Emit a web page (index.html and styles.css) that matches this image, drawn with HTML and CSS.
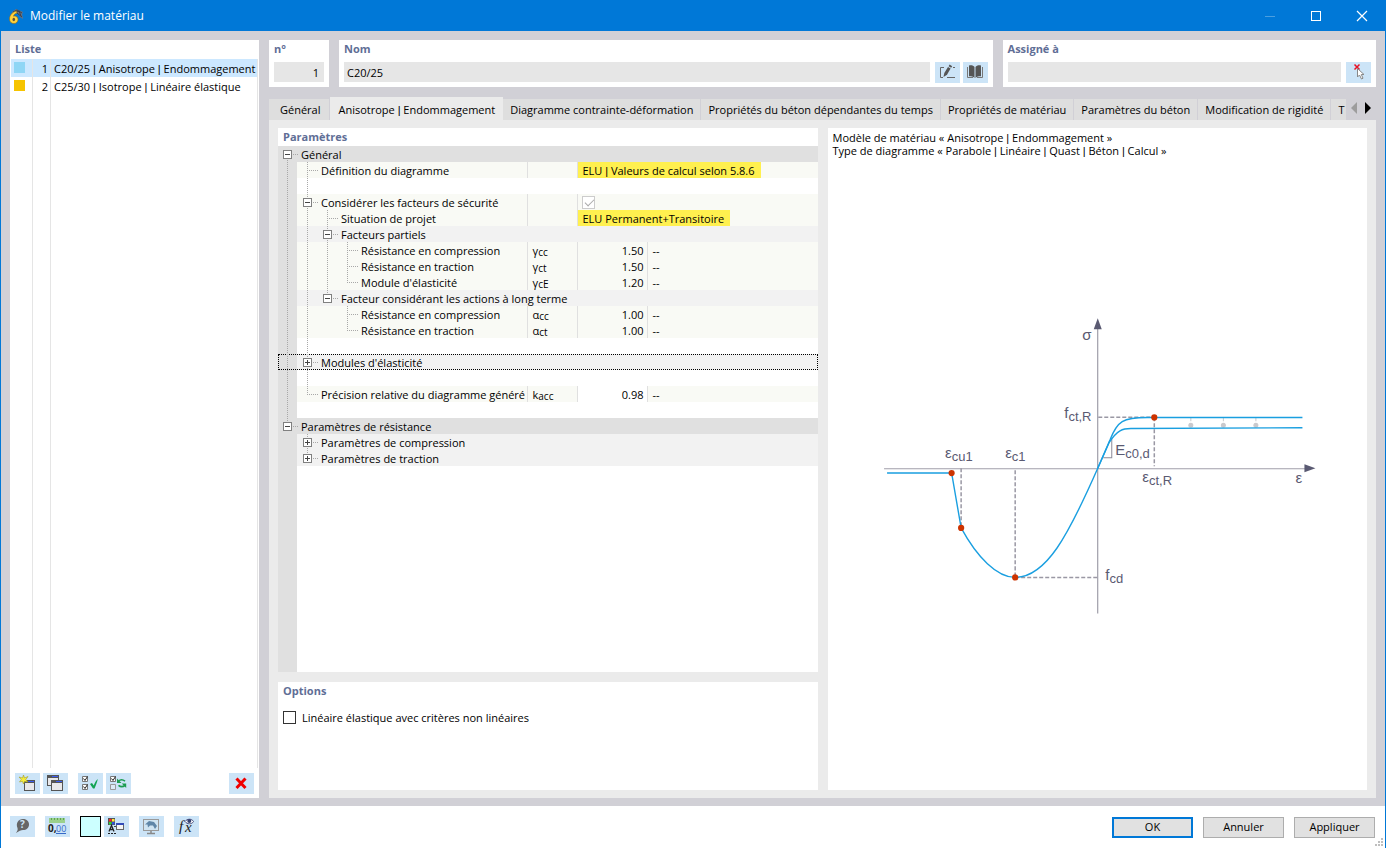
FILE: index.html
```html
<!DOCTYPE html>
<html lang="fr">
<head>
  <meta charset="UTF-8">
  <meta name="viewport" content="width=device-width, initial-scale=1.0">
  <title>Modifier le matériau</title>
  <link rel="stylesheet" href="styles.css">
</head>
<body>
  <div class="window">
    <!-- Barre de titre -->
    <header class="titlebar">
      <svg class="app-icon" width="16" height="16" viewBox="0 0 16 16">
        <path d="M4 4 L8 1 L15 4 L14 6 L15 11 L12 9 L10 5 L5 6Z" fill="#6d7280"/>
        <path d="M5 4 L9 2 L14 5 M8 4 L12 3 M11 3 L13 8 M9 5 L14 9" stroke="#39424f" fill="none"/>
        <path d="M8.500 3 C4 4 1.500 7.500 1.500 11 C1.500 14 3.500 15.500 6 15.500 C8.500 15.500 10 13.500 10 11.500 C10 9.500 8.500 8 6.500 8 L5.500 8.200 C6 6.500 7 5.500 9 5Z" fill="#ffd23c" stroke="#8a6a14" stroke-width=".6"/>
        <ellipse cx="5.800" cy="11.500" rx="1.300" ry="1.800" fill="#5c5540"/>
      </svg>
      <h1>Modifier le matériau</h1>
      <div class="window-buttons">
        <button aria-label="Réduire"><svg width="12" height="12"><path d="M1 6.500H11" stroke="#4b9fe0"/></svg></button>
        <button aria-label="Agrandir"><svg width="12" height="12"><rect x="1.500" y="1.500" width="9" height="9" fill="none" stroke="#fff"/></svg></button>
        <button aria-label="Fermer"><svg width="12" height="12"><path d="M1 1L11 11M11 1L1 11" stroke="#fff" stroke-width="1.200"/></svg></button>
      </div>
    </header>

    <main class="content">
      <!-- Liste des matériaux -->
      <section class="panel list-panel">
        <h2>Liste</h2>
        <div class="list-area">
          <table class="list">
            <colgroup><col class="col-color"><col class="col-num"><col></colgroup>
            <tr class="selected">
              <td class="color"><span class="swatch swatch-blue"></span></td>
              <td class="num">1</td>
              <td>C20/25 <span class="sep">|</span> Anisotrope <span class="sep">|</span> Endommagement</td>
            </tr>
            <tr>
              <td class="color"><span class="swatch swatch-yellow"></span></td>
              <td class="num">2</td>
              <td>C25/30 <span class="sep">|</span> Isotrope <span class="sep">|</span> Linéaire élastique</td>
            </tr>
          </table>
        </div>
        <div class="list-tools">
          <button class="tool" aria-label="Nouveau">
            <svg width="25" height="21">
              <rect x="9.500" y="7.500" width="10" height="10" fill="#e8e8ea" stroke="#555"/>
              <rect x="9" y="7" width="11" height="3" fill="#555"/><rect x="13" y="8" width="6" height="1" fill="#3c5cf0"/>
              <path d="M8.500 2L9.500 5L13 3.500L10.800 6.500L13 9L9.500 8.500L8.500 11L7.500 8.300L4.500 9L6.300 6.500L4 4L7.500 5Z" fill="#f7ee3c" stroke="#a59d28" stroke-width=".6"/>
            </svg>
          </button>
          <button class="tool" aria-label="Copier">
            <svg width="25" height="21">
              <rect x="4.500" y="2.500" width="11" height="10" fill="#e8e8ea" stroke="#555"/>
              <rect x="4" y="2" width="12" height="3" fill="#555"/><rect x="9" y="3" width="6" height="1" fill="#3c5cf0"/>
              <rect x="8.500" y="7.500" width="11" height="10" fill="#e8e8ea" stroke="#555"/>
              <rect x="8" y="7" width="12" height="3" fill="#555"/><rect x="13" y="8" width="6" height="1" fill="#3c5cf0"/>
            </svg>
          </button>
          <button class="tool gap-before" aria-label="Tout cocher">
            <svg width="25" height="21">
              <path d="M4.500 3.500h5v5h-5zM4.500 11.500h5v5h-5z" fill="#fff" stroke="#777"/>
              <path d="M5.500 5.500l1.500 2 2.500-4M5.500 13.500l1.500 2 2.500-4" stroke="#222" fill="none"/>
              <path d="M12 11l2-1 1.800 2.500c1-3 2.200-4.800 4-6.500-.5 2.500-1.600 5.500-3.300 9.500H15z" fill="#12a352"/>
            </svg>
          </button>
          <button class="tool" aria-label="Inverser la sélection">
            <svg width="25" height="21">
              <path d="M4.500 3.500h5v5h-5z" fill="#fff" stroke="#777"/>
              <path d="M4.500 11.500h5v5h-5z" fill="#dcebf7" stroke="#999"/>
              <path d="M5.500 5.500l1.500 2 2.500-4" stroke="#222" fill="none"/>
              <path d="M12.500 8C14.500 6.300 17 6.500 19 8.200M19 12.300C17 14 14.500 14 12.500 12.300" stroke="#1c9c50" stroke-width="1.600" fill="none"/>
              <path d="M11 5.500V10H15.500ZM20.200 15V10.500H15.700Z" fill="#1c9c50"/>
            </svg>
          </button>
          <button class="tool push-right" aria-label="Supprimer">
            <svg width="25" height="21"><path d="M7.500 5.500L16.500 15M16.500 5.500L7.500 15" stroke="#f00000" stroke-width="3"/></svg>
          </button>
        </div>
      </section>

      <div class="main">
        <!-- Numéro, nom, affectation -->
        <div class="fields">
          <div class="panel field-no">
            <label for="no">n°</label>
            <input id="no" type="text" value="1" readonly>
          </div>
          <div class="panel field-name">
            <label for="nom">Nom</label>
            <div class="field-row">
              <input id="nom" type="text" value="C20/25" readonly>
              <button class="tool" aria-label="Modifier le nom">
                <svg width="25" height="21">
                  <path d="M9 5.500H5.500V15.500H8M12 15.500H20M18 5.500H20" stroke="#666" fill="none"/>
                  <path d="M8.500 15l.8-4L13 5l2.600 1.600L12 12.800z" fill="#555"/><path d="M13.600 4.200l1-1.600 2.600 1.600-1 1.600z" fill="#555"/>
                </svg>
              </button>
              <button class="tool" aria-label="Bibliothèque">
                <svg width="25" height="21">
                  <path d="M4.500 5V15.500H10M14 15.500H19.500V5" stroke="#777" fill="none"/>
                  <path d="M6 3.500C8.500 3 10.500 3.500 11.500 5V16C10 14.500 8.500 14.300 6 14.300zM18 3.500C15.500 3 13.500 3.500 12.500 5V16C14 14.500 15.500 14.300 18 14.300z" fill="#555"/>
                </svg>
              </button>
            </div>
          </div>
          <div class="panel field-assign">
            <label for="assigne">Assigné à</label>
            <div class="field-row">
              <input id="assigne" type="text" value="" readonly>
              <button class="tool" aria-label="Sélectionner">
                <svg width="25" height="21">
                  <path d="M8.500 2.500l5 5M13.500 2.500l-5 5" stroke="#e81123" stroke-width="1.500"/>
                  <path d="M11.500 6.500V15l2-2 2 4 1.500-.8L15.300 12.500H18z" fill="#fff" stroke="#888"/>
                </svg>
              </button>
            </div>
          </div>
        </div>

        <!-- Onglets -->
        <div class="tab-bar">
          <nav class="tabs">
            <button class="tab tab-first">Général</button>
            <button class="tab active">Anisotrope <span class="sep">|</span> Endommagement</button>
            <button class="tab">Diagramme contrainte-déformation</button>
            <button class="tab">Propriétés du béton dépendantes du temps</button>
            <button class="tab">Propriétés de matériau</button>
            <button class="tab">Paramètres du béton</button>
            <button class="tab">Modification de rigidité</button>
            <button class="tab">T</button>
          </nav>
          <div class="tab-arrows">
            <button aria-label="Onglets précédents"><svg width="8" height="12"><path d="M7 0V12L1 6Z" fill="#9d9d9d"/></svg></button>
            <button aria-label="Onglets suivants"><svg width="8" height="12"><path d="M1 0V12L7 6Z" fill="#000"/></svg></button>
          </div>
        </div>

        <div class="tab-page">
          <div class="left-col">
            <!-- Arborescence des paramètres -->
            <section class="panel params">
              <h2>Paramètres</h2>
              <div class="tree-area">
                <table class="tree">
                  <colgroup><col class="col-name"><col class="col-symbol"><col class="col-value"><col></colgroup>
                  <tr class="root">
                    <td colspan="4"><div class="node"><span class="g"><button class="toggle down" aria-label="Réduire Général"></button></span><span>Général</span></div></td>
                  </tr>
                  <tr class="item">
                    <td><div class="node"><span class="g v"></span><span class="g v t"></span><span>Définition du diagramme</span></div></td>
                    <td></td>
                    <td colspan="2" class="choice"><span class="mark">ELU <span class="sep">|</span> Valeurs de calcul selon 5.8.6</span></td>
                  </tr>
                  <tr>
                    <td colspan="4"><div class="node"><span class="g v"></span><span class="g v"></span></div></td>
                  </tr>
                  <tr class="item">
                    <td><div class="node"><span class="g v"></span><span class="g v"><button class="toggle" aria-label="Réduire Considérer"></button></span><label for="secu">Considérer les facteurs de sécurité</label></div></td>
                    <td></td>
                    <td colspan="2" class="check-cell"><input id="secu" class="check-off" type="checkbox" checked disabled></td>
                  </tr>
                  <tr class="item">
                    <td><div class="node"><span class="g v"></span><span class="g v"></span><span class="g v t"></span><span>Situation de projet</span></div></td>
                    <td></td>
                    <td colspan="2" class="choice"><span class="mark">ELU Permanent+Transitoire</span></td>
                  </tr>
                  <tr class="group">
                    <td colspan="4"><div class="node"><span class="g v"></span><span class="g v"></span><span class="g v"><button class="toggle" aria-label="Réduire Facteurs partiels"></button></span><span>Facteurs partiels</span></div></td>
                  </tr>
                  <tr class="item">
                    <td><div class="node"><span class="g v"></span><span class="g v"></span><span class="g v"></span><span class="g v t"></span><span>Résistance en compression</span></div></td>
                    <td class="symbol">γ<sub>cc</sub></td><td class="value">1.50</td><td>--</td>
                  </tr>
                  <tr class="item">
                    <td><div class="node"><span class="g v"></span><span class="g v"></span><span class="g v"></span><span class="g v t"></span><span>Résistance en traction</span></div></td>
                    <td class="symbol">γ<sub>ct</sub></td><td class="value">1.50</td><td>--</td>
                  </tr>
                  <tr class="item">
                    <td><div class="node"><span class="g v"></span><span class="g v"></span><span class="g v"></span><span class="g l t"></span><span>Module d'élasticité</span></div></td>
                    <td class="symbol">γ<sub>cE</sub></td><td class="value">1.20</td><td>--</td>
                  </tr>
                  <tr class="group">
                    <td colspan="4"><div class="node"><span class="g v"></span><span class="g v"></span><span class="g l"><button class="toggle" aria-label="Réduire Facteur long terme"></button></span><span>Facteur considérant les actions à long terme</span></div></td>
                  </tr>
                  <tr class="item">
                    <td><div class="node"><span class="g v"></span><span class="g v"></span><span class="g"></span><span class="g v t"></span><span>Résistance en compression</span></div></td>
                    <td class="symbol">α<sub>cc</sub></td><td class="value">1.00</td><td>--</td>
                  </tr>
                  <tr class="item">
                    <td><div class="node"><span class="g v"></span><span class="g v"></span><span class="g"></span><span class="g l t"></span><span>Résistance en traction</span></div></td>
                    <td class="symbol">α<sub>ct</sub></td><td class="value">1.00</td><td>--</td>
                  </tr>
                  <tr>
                    <td colspan="4"><div class="node"><span class="g v"></span><span class="g v"></span></div></td>
                  </tr>
                  <tr class="group focused">
                    <td colspan="4"><div class="node"><span class="g v"></span><span class="g v"><button class="toggle plus" aria-label="Développer Modules d'élasticité"></button></span><span>Modules d'élasticité</span></div></td>
                  </tr>
                  <tr>
                    <td colspan="4"><div class="node"><span class="g v"></span><span class="g v"></span></div></td>
                  </tr>
                  <tr class="item">
                    <td><div class="node"><span class="g v"></span><span class="g l t"></span><span>Précision relative du diagramme généré</span></div></td>
                    <td class="symbol">k<sub>acc</sub></td><td class="value editable">0.98</td><td>--</td>
                  </tr>
                  <tr>
                    <td colspan="4"><div class="node"><span class="g v"></span></div></td>
                  </tr>
                  <tr class="root">
                    <td colspan="4"><div class="node"><span class="g l"><button class="toggle" aria-label="Réduire Paramètres de résistance"></button></span><span>Paramètres de résistance</span></div></td>
                  </tr>
                  <tr class="group">
                    <td colspan="4"><div class="node"><span class="g"></span><span class="g v"><button class="toggle plus" aria-label="Développer compression"></button></span><span>Paramètres de compression</span></div></td>
                  </tr>
                  <tr class="group">
                    <td colspan="4"><div class="node"><span class="g"></span><span class="g l"><button class="toggle plus" aria-label="Développer traction"></button></span><span>Paramètres de traction</span></div></td>
                  </tr>
                </table>
              </div>
            </section>

            <section class="panel options">
              <h2>Options</h2>
              <label class="option"><input type="checkbox"> Linéaire élastique avec critères non linéaires</label>
            </section>
          </div>

          <!-- Diagramme -->
          <section class="panel diagram">
            <p>Modèle de matériau « Anisotrope <span class="sep">|</span> Endommagement »</p>
            <p>Type de diagramme « Parabole <span class="sep">|</span> Linéaire <span class="sep">|</span> Quast <span class="sep">|</span> Béton <span class="sep">|</span> Calcul »</p>
            <svg viewBox="828 157 539 632">
              <!-- axes -->
              <g stroke="#8c8a98" fill="none">
                <path d="M884 468.500H1305" stroke="#a09eaa"/>
                <path d="M1097.500 328V613"/>
                <path d="M1103 457.500H1111.500V438"/>
              </g>
              <path d="M1097.500 318L1101.500 329H1093.500ZM1315 468L1304 472V464Z" fill="#5a5a72"/>
              <!-- lignes de repère -->
              <g stroke="#9a98a4" stroke-width="1.500" stroke-dasharray="4 2" fill="none">
                <path d="M961 468V528M1015 470V577M1015 577H1097M1098 417H1154M1154 417V466"/>
              </g>
              <g stroke="#c9c9cd" fill="#c9c9cd">
                <path d="M1190.500 417V425M1223 417V425M1255.500 417V425" stroke-dasharray="4 2"/>
                <circle cx="1190.500" cy="425" r="2"/><circle cx="1223" cy="425" r="2"/><circle cx="1255.500" cy="425" r="2"/>
              </g>
              <!-- courbes -->
              <g stroke="#1a9fe0" stroke-width="1.400" fill="none">
                <path d="M887 472.700H951.500L961 527.500C977 557 997 577 1015 577C1046 577 1068 535 1097.500 468L1110 439C1117 421 1122 417 1149 417.300H1302"/>
                <path d="M1097.500 468L1109 442C1117 430 1122 428 1132 428.300L1302 427.500"/>
              </g>
              <g fill="#cc3300">
                <circle cx="951.500" cy="472.800" r="3.100"/><circle cx="961" cy="527.600" r="3.100"/>
                <circle cx="1015" cy="577" r="3.100"/><circle cx="1154" cy="417.200" r="3.100"/>
              </g>
              <g class="diagram-text">
                <text x="1082" y="340">σ</text>
                <text x="1295" y="483">ε</text>
                <text x="1064" y="418">f<tspan class="sub" dy="3">ct,R</tspan></text>
                <text x="945" y="458">ε<tspan class="sub" dy="3">cu1</tspan></text>
                <text x="1005" y="458">ε<tspan class="sub" dy="3">c1</tspan></text>
                <text x="1115" y="455">E<tspan class="sub" dy="3">c0,d</tspan></text>
                <text x="1142" y="482">ε<tspan class="sub" dy="3">ct,R</tspan></text>
                <text x="1105" y="580">f<tspan class="sub" dy="3">cd</tspan></text>
              </g>
            </svg>
          </section>
        </div>
      </div>
    </main>

    <!-- Barre du bas -->
    <footer class="footer">
      <button class="tool" aria-label="Aide">
        <svg width="25" height="21">
          <path d="M13 3C17 3 19 5.500 19 8.500C19 12 16.500 14 13 14C11 14 9 15 6 17C7.500 15 8 13.500 7.500 12C5.500 7 8.500 3 13 3Z" fill="#666"/>
          <text x="10" y="12" font-size="10" font-weight="bold" fill="#cce4f7">?</text>
        </svg>
      </button>
      <button class="tool" aria-label="Unités et décimales">
        <svg width="25" height="21">
          <rect x="4" y="2" width="16" height="5" fill="#9ad08c"/><path d="M6.500 2v2M9.500 2v2M12.500 2v2M15.500 2v2M18.500 2v2" stroke="#5fa552"/>
          <text x="3" y="16" font-size="10" font-weight="bold" fill="#222">0,</text>
          <text x="11" y="16" font-size="9" fill="#3569c8">00</text><path d="M11 17.500H21" stroke="#3569c8"/>
        </svg>
      </button>
      <button class="color-button" aria-label="Couleur"></button>
      <button class="tool" aria-label="Affichage">
        <svg width="25" height="21">
          <rect x="4" y="2" width="7" height="7" fill="#555"/>
          <rect x="5" y="3" width="2.500" height="2.500" fill="#f22"/><rect x="8" y="3" width="2.500" height="2.500" fill="#ffe93a"/><rect x="5" y="6" width="2.500" height="2.500" fill="#25d135"/><rect x="8" y="6" width="2.500" height="2.500" fill="#2c4fe0"/>
          <path d="M5 15.500L7.500 9.500L10 15.500M6 13.500H9" stroke="#222" fill="none" stroke-width="1.300"/>
          <path d="M4 17.500H12" stroke="#222" stroke-dasharray="2 1"/>
          <path d="M10 10.500H12" stroke="#444"/>
          <rect x="12.500" y="7.500" width="7" height="6" fill="#f4f4f4" stroke="#666"/><rect x="12" y="7" width="8" height="2" fill="#334bb8"/>
        </svg>
      </button>
      <button class="tool gap-before" aria-label="Vue">
        <svg width="25" height="21">
          <rect x="4.500" y="3.500" width="15" height="11" fill="#d0e4f2" stroke="#999"/>
          <path d="M6 8.500L10 5L15 6L18 10L16 13L14 9.500L11 9.500L9 11.500L8.500 8.500Z" fill="#5f86a8"/>
          <path d="M12 15V17.500M8 17.500H16" stroke="#888" stroke-width="1.500"/>
        </svg>
      </button>
      <button class="tool gap-before" aria-label="Formules">
        <svg width="25" height="21">
          <text x="5" y="15" class="fx">f</text><text x="11" y="16" class="fx">x</text>
          <path d="M11 5.500C13 2.500 18 2.500 19.500 5.500C18 8.500 13 8.500 11 5.500Z" fill="#fff" stroke="#4a4f80"/><circle cx="15.300" cy="5" r="2" fill="#333f70"/>
        </svg>
      </button>
      <div class="dialog-buttons">
        <button class="dialog-button default">OK</button>
        <button class="dialog-button">Annuler</button>
        <button class="dialog-button">Appliquer</button>
      </div>
      <svg class="grip" width="8" height="8"><path d="M6 0h2v2h-2zM3 3h2v2h-2zM6 3h2v2h-2zM0 6h2v2h-2zM3 6h2v2h-2zM6 6h2v2h-2z" fill="#bfbfbf"/></svg>
    </footer>
  </div>
</body>
</html>
```
FILE: styles.css
```css
* {
  box-sizing: border-box;
}

body {
  margin: 0;
  font-family: "Open Sans", "Noto Sans", sans-serif;
  font-size: 11px;
  line-height: 16px;
  color: #000;
}

button, input {
  font: inherit;
  color: inherit;
  margin: 0;
  padding: 0;
  border: none;
  border-radius: 0;
  background: none;
}

button svg {
  display: block;
}

/* Barre verticale étroite entre deux libellés */
.sep {
  font-family: "Liberation Sans", Arial, sans-serif;
  line-height: 1;
}

.window {
  display: flex;
  flex-direction: column;
  min-height: 100vh;
  border: 1px solid #0078d7;
  border-top: none;
  background: #fff;
}

/* Barre de titre */
.titlebar {
  display: flex;
  align-items: center;
  height: 31px;
  padding-left: 7px;
  background: #0078d7;
  color: #fff;
}

.titlebar h1 {
  margin: 0 0 0 6px;
  font-size: 12px;
  font-weight: normal;
}

.window-buttons {
  display: flex;
  margin-left: auto;
}

.window-buttons button {
  display: flex;
  align-items: center;
  justify-content: center;
  width: 46px;
  height: 31px;
}

/* Zone principale */
.content {
  flex: 1;
  display: flex;
  gap: 10px;
  padding: 9px 9px 8px;
  background: #d1d0d6;
}

.panel {
  background: #fff;
}

.panel h2,
.panel > label:first-child {
  display: block;
  margin: 0;
  padding-left: 5px;
  height: 18px;
  font-size: 11px;
  line-height: 18px;
  font-weight: bold;
  color: #5f6e96;
}

/* Liste */
.list-panel {
  display: flex;
  flex-direction: column;
  width: 249px;
}

.list-area {
  flex: 1;
  margin: 1px 1px 0;
  border-right: 1px solid #e5e5e5;
  background: linear-gradient(#e5e5e5, #e5e5e5) 21px 0 / 1px 100% no-repeat,
              linear-gradient(#e5e5e5, #e5e5e5) 39px 0 / 1px 100% no-repeat;
}

.list {
  width: 100%;
  table-layout: fixed;
  border-spacing: 0;
}

.col-color {
  width: 22px;
}

.col-num {
  width: 18px;
}

.list td {
  height: 18px;
  padding: 2px 0 0 3px;
  border-right: 1px solid #e5e5e5;
  white-space: nowrap;
}

.list td:last-child {
  border-right: none;
}

.list .color {
  padding: 0 0 2px 3px;
}

.list .num {
  padding: 2px 2px 0 0;
  text-align: right;
}

.list .selected {
  background: #cce8ff;
}

.swatch {
  display: block;
  width: 11px;
  height: 11px;
}

.swatch-blue {
  background: #8fd6f5;
}

.swatch-yellow {
  background: #f6c400;
}

.list-tools {
  display: flex;
  gap: 3px;
  padding: 5px 5px 4px;
}

.tool {
  flex: none;
  width: 25px;
  height: 21px;
  background: #cce4f7;
}

.gap-before {
  margin-left: 7px;
}

.push-right {
  margin-left: auto;
}

/* Champs du haut */
.main {
  flex: 1;
  min-width: 0;
  display: flex;
  flex-direction: column;
}

.fields {
  display: flex;
  gap: 10px;
}

.fields .panel {
  height: 47px;
}

.fields input {
  height: 20px;
  padding: 1px 3px 0;
  background: #e6e6e6;
  width: 100%;
  min-width: 0;
}

.field-no {
  width: 60px;
  padding-right: 5px;
}

.fields .field-no input {
  display: block;
  width: 50px;
  margin: 4px 0 0 5px;
  padding-right: 5px;
  text-align: right;
}

.field-name {
  flex: 7;
}

.field-assign {
  flex: 4;
}

.field-row {
  display: flex;
  gap: 5px;
  margin: 4px 5px 0;
}

.field-row .tool + .tool {
  margin-left: -2px;
}

/* Onglets */
.tab-bar {
  display: flex;
  margin-top: 10px;
}

.tabs {
  flex: 1;
  min-width: 0;
  display: flex;
  align-items: flex-end;
  overflow: hidden;
}

.tab {
  flex: none;
  height: 21px;
  padding: 1px 7px 0;
  border-right: 1px solid #d1d0d6;
  background: #dedede;
  white-space: nowrap;
}

.tab-first {
  padding-left: 11px;
  padding-right: 9px;
}

.tab.active {
  height: 23px;
  padding: 3px 8px 0;
  border-right: none;
  background: #ebebeb;
}

.tab-arrows {
  display: flex;
  gap: 6px;
  padding: 0 4px 2px 4px;
}

/* Page de l'onglet */
.tab-page {
  flex: 1;
  display: flex;
  gap: 10px;
  padding: 8px 9px;
  background: #ebebeb;
}

.left-col {
  flex: 1;
  min-width: 0;
  display: flex;
  flex-direction: column;
  gap: 10px;
}

.params {
  flex: 1;
  display: flex;
  flex-direction: column;
}

.tree-area {
  flex: 1;
  background: linear-gradient(#e0e0e0, #e0e0e0) 0 0 / 19px 100% no-repeat;
}

.tree {
  width: 100%;
  table-layout: fixed;
  border-collapse: collapse;
}

.col-name {
  width: 249px;
}

.col-symbol {
  width: 50px;
}

.col-value {
  width: 70px;
}

.tree td {
  height: 16px;
  padding: 2px 0 0 5px;
  line-height: 14px;
  white-space: nowrap;
}

.tree td:first-child {
  padding: 0;
  background-image: linear-gradient(#e0e0e0, #e0e0e0);
  background-size: 19px 100%;
  background-repeat: no-repeat;
}

.tree .root td {
  background-color: #e0e0e0;
}

.tree .group td {
  background-color: #f2f2f2;
}

.tree .item td {
  background-color: #f9faf5;
}

.tree .item td + td {
  border-left: 1px solid #e0e0e0;
}

.tree .value {
  padding-right: 3px;
  text-align: right;
}

.tree .item .editable {
  background-color: #fff;
}

.tree .item .choice {
  padding: 0;
}

.tree .check-cell {
  padding: 0 0 0 4px;
}

.mark {
  display: inline-block;
  height: 16px;
  padding: 0 6px 0 5px;
  line-height: 18px;
  background: #fff04f;
  vertical-align: top;
}

.focused {
  outline: 1px dotted #000;
  outline-offset: -1px;
}

.symbol sub {
  font-size: 10px;
  line-height: 0;
  vertical-align: -1px;
}

.node {
  display: flex;
  height: 16px;
  line-height: 18px;
}

.node > :last-child:not(.g) {
  padding-left: 3px;
}

/* Lignes pointillées de l'arborescence */
.g {
  position: relative;
  flex: none;
  width: 20px;
  height: 16px;
  --dots-v: repeating-linear-gradient(#a8a8a8 0 1px, transparent 1px 2px);
  --dots-h: repeating-linear-gradient(90deg, #a8a8a8 0 1px, transparent 1px 2px);
  background-repeat: no-repeat;
}

.g.v {
  background-image: var(--dots-v);
  background-size: 1px 16px;
  background-position: 9px 0;
}

.g.l {
  background-image: var(--dots-v);
  background-size: 1px 8px;
  background-position: 9px 0;
}

.g.v.t {
  background-image: var(--dots-v), var(--dots-h);
  background-size: 1px 16px, 11px 1px;
  background-position: 9px 0, 9px 8px;
}

.g.l.t {
  background-image: var(--dots-v), var(--dots-h);
  background-size: 1px 8px, 11px 1px;
  background-position: 9px 0, 9px 8px;
}

.toggle {
  display: block;
  width: 9px;
  height: 9px;
  margin: 4px 0 0 5px;
  border: 1px solid #808080;
  background: linear-gradient(#444, #444) 1px 3px / 5px 1px no-repeat, #fff;
}

.toggle.plus {
  background: linear-gradient(#444, #444) 1px 3px / 5px 1px no-repeat,
              linear-gradient(#444, #444) 3px 1px / 1px 5px no-repeat, #fff;
}

.toggle::after {
  content: "";
  position: absolute;
  left: 15px;
  top: 8px;
  width: 5px;
  height: 1px;
  background: var(--dots-h);
}

.toggle.down::before {
  content: "";
  position: absolute;
  left: 9px;
  top: 14px;
  width: 1px;
  height: 2px;
  background: var(--dots-v);
}

/* Cases à cocher */
input[type="checkbox"] {
  appearance: none;
  display: block;
  width: 13px;
  height: 13px;
  border: 1px solid #333;
  background: #fff;
}

input.check-off {
  border-color: #ccc;
  position: relative;
}

input.check-off::after {
  content: "";
  position: absolute;
  left: 2px;
  top: 2px;
  width: 8px;
  height: 4px;
  border: solid #aaa;
  border-width: 0 0 1px 1px;
  transform: rotate(-45deg);
}

.options {
  height: 108px;
}

.option {
  display: flex;
  align-items: center;
  gap: 6px;
  margin: 10px 5px;
}

/* Diagramme */
.diagram {
  flex: 1;
  min-width: 0;
  display: flex;
  flex-direction: column;
  padding-top: 3px;
}

.diagram p {
  margin: 0;
  padding-left: 5px;
  line-height: 13px;
}

.diagram svg {
  flex: 1;
  width: 100%;
  min-height: 0;
}

.diagram-text {
  font-family: "Liberation Sans", Arial, sans-serif;
  font-size: 15px;
  fill: #5a5a72;
}

.diagram-text .sub {
  font-size: 13px;
}

/* Barre du bas */
.footer {
  position: relative;
  display: flex;
  align-items: flex-start;
  gap: 3px;
  height: 42px;
  padding: 10px 10px 0 9px;
}

.footer .tool:nth-child(2),
.color-button {
  margin-left: 7px;
}

.color-button {
  width: 21px;
  height: 21px;
  border: 1px solid #000;
  background: #ccffff;
}

.fx {
  font-family: "Liberation Serif", serif;
  font-size: 15px;
  font-style: italic;
  fill: #222;
}

.dialog-buttons {
  display: flex;
  gap: 10px;
  margin-left: auto;
  padding-top: 1px;
}

.dialog-button {
  width: 81px;
  height: 21px;
  border: 1px solid #adadad;
  background: #e1e1e1;
}

.dialog-button.default {
  border: 2px solid #0078d7;
}

.grip {
  position: absolute;
  right: 2px;
  bottom: 2px;
}
```
